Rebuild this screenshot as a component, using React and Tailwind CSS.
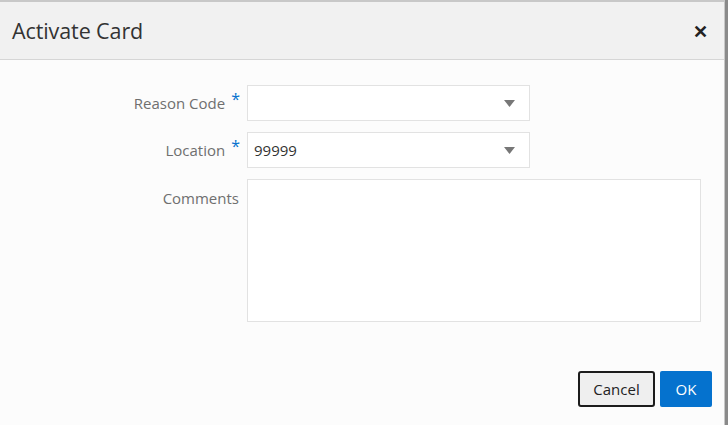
export default function App() {
  return (
    <div className="w-[728px] h-[425px] bg-[#8a8a8a] overflow-hidden" style={{ fontFamily: '"Open Sans", "Noto Sans", sans-serif' }}>
      <div className="w-[725px] h-[425px] bg-[#fcfcfc] border-t-2 border-r border-[#c8c8c8] flex flex-col">
        {/* header */}
        <div className="h-[58px] bg-[#f1f1f1] border-b border-[#d6d6d6] flex items-center justify-between pl-3 pr-4">
          <h1 className="text-[21.5px] text-[#333] tracking-[-0.1px] mt-[1px]">Activate Card</h1>
          <button className="text-[#222] text-[18px] font-bold leading-none">✕</button>
        </div>

        {/* form */}
        <div className="flex-1 pt-[25px] pr-6">
          <div className="grid grid-cols-[247px_1fr] gap-y-[11px]">
            <div className="flex justify-end items-center pr-[7px] h-[36px]">
              <span className="text-[15px] text-[#6f6f6f]">Reason Code</span>
              <span className="text-[#0572ce] text-[16px] ml-[6px] -mt-2">*</span>
            </div>
            <div className="w-[283px] h-[36px] border border-[#e2e2e2] bg-white flex items-center justify-end pr-[14px]">
              <Caret />
            </div>

            <div className="flex justify-end items-center pr-[7px] h-[36px]">
              <span className="text-[15px] text-[#6f6f6f]">Location</span>
              <span className="text-[#0572ce] text-[16px] ml-[6px] -mt-2">*</span>
            </div>
            <div className="w-[283px] h-[36px] border border-[#e2e2e2] bg-white flex items-center justify-between pl-[6px] pr-[14px]">
              <span className="text-[15px] text-[#333]">99999</span>
              <Caret />
            </div>

            <div className="flex justify-end pr-[8px] pt-[8px]">
              <span className="text-[15px] text-[#6f6f6f]">Comments</span>
            </div>
            <div className="w-[454px] h-[143px] border border-[#e2e2e2] bg-white" />
          </div>
        </div>

        {/* footer */}
        <div className="flex justify-end gap-[5px] pr-[12px] pb-[18px]">
          <button className="w-[77px] h-[36px] rounded-[3px] border-2 border-[#1c1c1c] bg-[#efefef] text-[15px] text-[#222]">Cancel</button>
          <button className="w-[52px] h-[36px] rounded-[2px] bg-[#0572ce] text-[15px] text-white">OK</button>
        </div>
      </div>
    </div>
  );
}

function Caret() {
  return (
    <svg width="11" height="7" viewBox="0 0 11 7">
      <path d="M0 0 L11 0 L5.5 7 Z" fill="#777" />
    </svg>
  );
}
